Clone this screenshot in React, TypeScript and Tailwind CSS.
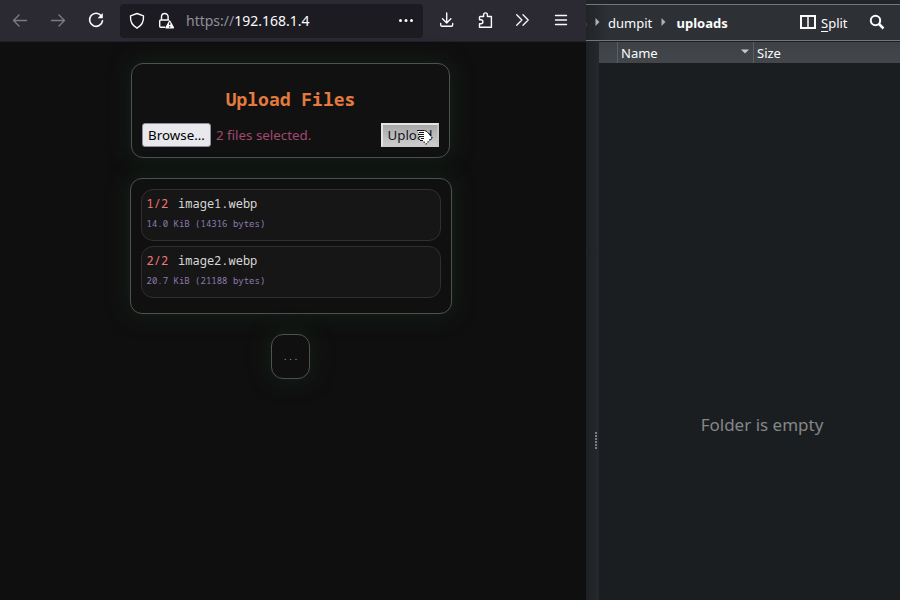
import React from "react";

const mono = "font-['Noto_Sans_Mono','DejaVu_Sans_Mono',monospace]";

function BrowserToolbar() {
  return (
    <header className="flex h-[42px] shrink-0 items-center border-b border-[#222128] bg-[#2b2a33] text-[#fbfbfe]">
      <svg width="120" height="41" viewBox="0 0 120 41" fill="none" strokeWidth="1.4" strokeLinecap="round" strokeLinejoin="round">
        <g stroke="#7c7b83">
          <path d="M26.5 20.5H13.5M19 15l-5.5 5.5L19 26" />
          <path d="M51.500 20.5H64.500M59 15l5.500 5.500L59 26" />
        </g>
        <path d="M101.500 16.200A6.500 6.500 0 1 0 102.500 20.800" stroke="#fbfbfe" strokeWidth="1.6" />
        <path d="M102.800 13v5.200h-5.200z" fill="#fbfbfe" />
      </svg>
      <div className="flex h-[34px] w-[303px] items-center rounded bg-[#1c1b22]">
        <svg width="66" height="34" viewBox="0 0 66 34" fill="none" stroke="#fbfbfe" strokeWidth="1.4" strokeLinejoin="round">
          <path d="M17 9.500l6.500 2.300c.4 5.700-1.700 9.800-6.500 12.400-4.800-2.600-6.900-6.700-6.500-12.400z" />
          <path d="M41.500 15.500v-2.700a3.300 3.300 0 0 1 6.600 0v2.700M45 23.300h-4.300a1 1 0 0 1-1-1v-5.300a1 1 0 0 1 1-1h8.300" />
          <path d="M49.700 17l3.700 6.700h-7.400z" fill="#fbfbfe" />
          <path d="M49.700 18.500v2.600M49.700 22.200v1.200" stroke="#1c1b22" strokeWidth="1.200" />
        </svg>
        <span className="w-[212px] whitespace-nowrap text-[14px] leading-5 text-[#8f8f9b]">
          https://<span className="text-[#fbfbfe]">192.168.1.4</span>
        </span>
        <svg width="18" height="34" viewBox="0 0 18 34" fill="#fbfbfe">
          <circle cx="2.500" cy="16.500" r="1.500" />
          <circle cx="8" cy="16.500" r="1.500" />
          <circle cx="13.500" cy="16.500" r="1.500" />
        </svg>
      </div>
      <svg width="163" height="41" viewBox="423 0 163 41" fill="none" stroke="#fbfbfe" strokeWidth="1.4" strokeLinecap="round" strokeLinejoin="round">
        <path d="M446.700 13v9.500M442.500 18.700l4.200 4.200 4.200-4.200M440.700 23.500v1.300a1.500 1.500 0 0 0 1.500 1.500h9a1.500 1.500 0 0 0 1.500-1.500v-1.300" />
        <path d="M480 16.500h3.600v-1.700a1.900 1.900 0 0 1 3.800 0v1.700h4v10.700h-11.900v-3.400h1.400a2 2 0 0 0 0-4h-1.400v-2.800z" />
        <path d="M516.700 14.800l5.200 5.200-5.200 5.200M523 14.800l5.200 5.200-5.200 5.200" strokeWidth="1.3" />
        <path d="M555.500 15.500h11M555.500 20h11M555.500 24.500h11" />
      </svg>
    </header>
  );
}

function HandCursor() {
  return (
    <svg className="absolute left-[35px] top-[6px]" width="17" height="17" viewBox="0 0 17 17">
      <path
        d="M1.500 1.500H9l2.500 1L16 8.500l-6 6.500-3.500-3.500H4.500l-.5-1.500 1.500-1L3 8l.5-2L2 5.500l1-1.500z"
        fill="#fff"
      />
      <path d="M1 1.500h7.500l2.500 1 3 3.500M3 3.500h5M2 5.500h6M3 7.500h5M5 9.500h3M4 11.500h3" fill="none" stroke="#111" />
      <path d="M14 6l2 2.500-6 6.500-3.500-3.500" fill="none" stroke="#111" strokeWidth="1.200" strokeDasharray="1.400 1.400" />
    </svg>
  );
}

function UploadForm() {
  return (
    <section className="mr-[2px] h-[95px] w-[319px] rounded-xl border border-[#505050] bg-[#111111] px-[10px] pt-[23px] shadow-[0_0_20px_2px_#142017]">
      <h1 className={`${mono} h-6 pl-px text-center text-[18px] font-bold leading-6 text-[#e37b40]`}>Upload Files</h1>
      <div className="mt-[12px] flex h-6 items-center text-[13.333px]">
        <button className="h-[24px] w-[69px] rounded-[3px] border border-[#8f8f9d] bg-[#e9e9ed] pl-px leading-[21px] text-black">Browse...</button>
        <span className="ml-[5.500px] leading-5 text-[#a3486f]">2 files selected.</span>
        <div className="relative ml-auto">
          <button className="block h-[24px] w-[58px] border-2 border-b-[#c9c9c9] border-l-[#e4e4e4] border-r-[#c4c4c4] border-t-[#e4e4e4] bg-linear-to-b from-[#a8a8a8] to-[#cccccc] pl-px text-center leading-[20px] text-[#15151d]">
            Upload
          </button>
          <HandCursor />
        </div>
      </div>
    </section>
  );
}

const files = [
  { index: "1/2", name: "image1.webp", size: "14.0 KiB (14316 bytes)" },
  { index: "2/2", name: "image2.webp", size: "20.7 KiB (21188 bytes)" },
];

function FileList() {
  return (
    <section className="mt-5 flex h-[136px] w-[322px] flex-col gap-[5px] rounded-xl border border-[#505050] bg-[#101010] p-[10px] shadow-[0_0_20px_2px_#142017]">
      {files.map((f) => (
        <div key={f.name} className={`${mono} h-[52px] rounded-xl border border-[#303030] bg-[#161616] px-[4.500px] pt-[5px]`}>
          <div className="flex h-[18px] gap-[10px] text-[12px] leading-[18px]">
            <span className="text-[#f07575]">{f.index}</span>
            <span className="text-[#d6d6d6]">{f.name}</span>
          </div>
          <div className="mt-[4px] text-[9px] leading-[13px] text-[#8d7ab0]">{f.size}</div>
        </div>
      ))}
    </section>
  );
}

function FileManager() {
  return (
    <aside className="flex w-[314px] flex-col bg-[#202428] text-[#fcfcfc]">
      <div className="h-[4px] shrink-0 bg-[#22262a]" />
      <div className="flex h-[37px] shrink-0 items-center border-y border-[#73777a] bg-linear-to-r from-[#202427] via-[#2d3135] via-[22px] to-[#2d3135] text-[13px]">
        <svg width="22" height="35" viewBox="0 0 22 35">
          <path d="M9.500 13l4 4-4 4z" fill="#aeb0b2" />
          <path d="M0 18h1v3H0z" fill="#653223" />
        </svg>
        <span className="w-[45px] leading-5">dumpit</span>
        <svg width="23" height="35" viewBox="0 0 23 35">
          <path d="M8.500 13l4 4-4 4z" fill="#aeb0b2" />
        </svg>
        <span className="w-[124px] pl-[.5px] font-bold leading-5">uploads</span>
        <svg width="16" height="35" viewBox="0 0 16 35" fill="none" stroke="#fcfcfc">
          <path d="M1 11h14v12H1z" strokeWidth="2" />
          <path d="M8 11v12" strokeWidth="1.500" />
        </svg>
        <span className="ml-[5px] leading-5">
          <span className="underline underline-offset-[3px]">S</span>plit
        </span>
        <svg className="ml-auto mr-[14px]" width="18" height="35" viewBox="0 0 18 35" fill="none" stroke="#fcfcfc" strokeWidth="2">
          <circle cx="7.500" cy="15.500" r="4.700" />
          <path d="M11 19l4.500 4.500" strokeWidth="2.500" />
        </svg>
      </div>
      <div className="flex min-h-0 flex-1">
        <div className="flex w-[13px] flex-col items-end bg-linear-to-r from-[#1d2124] to-[#25292d] pr-[1px] pt-[391px]">
          <svg width="3" height="18" viewBox="0 0 3 18">
            <path d="M1 0v18" stroke="#7b7f82" strokeWidth="2" strokeDasharray="2 1" />
          </svg>
        </div>
        <div className="flex flex-1 flex-col bg-[#1b1e20]">
          <div className="mt-px flex h-[21px] shrink-0 bg-linear-to-b from-[#3e4246] to-[#43474b] text-[13px] leading-[22px]">
            <div className="w-[19px] border-r border-[#5b5f62]" />
            <div className="flex w-[136px] justify-between border-r border-[#5b5f62] pl-[3px]">
              <span>Name</span>
              <svg width="13" height="20" viewBox="0 0 13 20">
                <path d="M1 7.500h8l-4 4z" fill="#c6c8ca" />
              </svg>
            </div>
            <span className="pl-[3px]">Size</span>
          </div>
          <p className="mt-[350px] pl-[25px] text-center text-[17px] leading-6 text-[#848688]">Folder is empty</p>
        </div>
      </div>
    </aside>
  );
}

export default function App() {
  return (
    <div className="flex h-[600px] w-[900px] overflow-hidden bg-[#0f0f0f] font-['Noto_Sans',sans-serif]">
      <div className="flex w-[586px] flex-col">
        <BrowserToolbar />
        <main className="flex flex-1 flex-col items-center pr-[4px] pt-[21px]">
          <UploadForm />
          <FileList />
          <div className={`${mono} mr-[2px] mt-5 h-[45px] w-[39px] rounded-xl border border-[#505050] bg-[#101010] pl-px text-center text-[9px] leading-[43px] text-[#a3ad8c] shadow-[0_0_20px_2px_#142017]`}>
            ...
          </div>
        </main>
      </div>
      <FileManager />
    </div>
  );
}
